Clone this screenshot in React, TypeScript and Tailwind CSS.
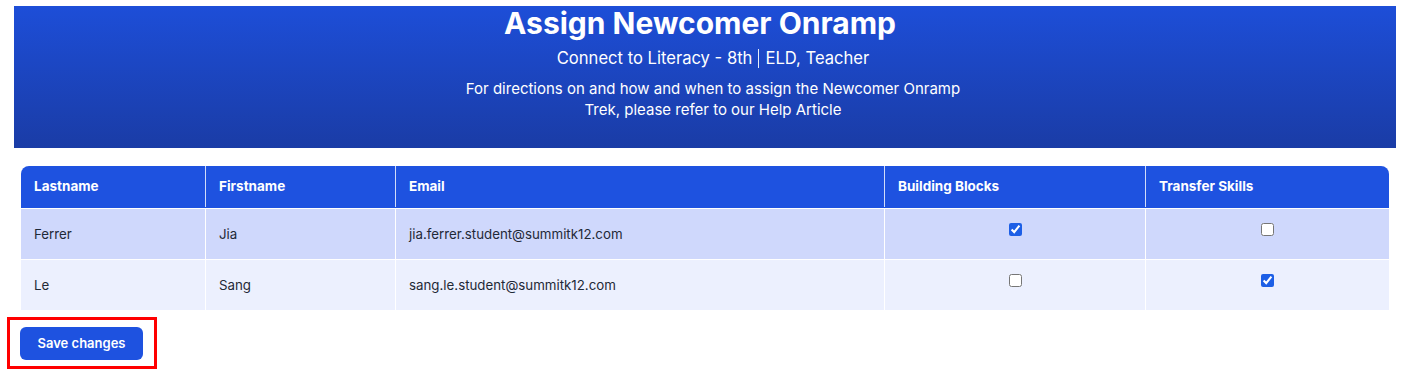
import React from 'react';

type Student = {
  last: string;
  first: string;
  email: string;
  blocks: boolean;
  transfer: boolean;
};

const students: Student[] = [
  { last: 'Ferrer', first: 'Jia', email: 'jia.ferrer.student@summitk12.com', blocks: true, transfer: false },
  { last: 'Le', first: 'Sang', email: 'sang.le.student@summitk12.com', blocks: false, transfer: true },
];

function Check({ checked }: { checked: boolean }) {
  return (
    <input
      type="checkbox"
      defaultChecked={checked}
      className="w-[13px] h-[13px] m-0 accent-[#1d5fe6] align-middle"
    />
  );
}

export default function App() {
  return (
    <div className="bg-white min-h-[376px] pt-[6px]" style={{ fontFamily: 'Inter, "Noto Sans", sans-serif' }}>
      {/* banner */}
      <div className="ml-[14px] w-[1382px] h-[142px] bg-gradient-to-b from-[#1d4ed8] to-[#1a3ca6] text-white flex flex-col items-center">
        <h1 className="mr-[10px] text-[30px] leading-[34px] font-bold">Assign Newcomer Onramp</h1>
        <p className="ml-[16px] mt-[8px] text-[16.6px] leading-[20px] flex items-center">
          Connect to Literacy - 8th
          <span className="mx-[6px] h-[19px] border-l border-white/90" />
          ELD, Teacher
        </p>
        <p className="ml-[16px] mt-[10px] text-[15px] leading-[21px] text-center max-w-[505px]">
          For directions on and how and when to assign the Newcomer Onramp Trek, please refer to our Help Article
        </p>
      </div>

      {/* table */}
      <div className="ml-[21px] mt-[18px] w-[1368px] text-[13.3px] text-[#1f2937]">
        <div className="grid grid-cols-[184px_190px_489px_261px_244px] bg-[#1e52e0] text-white text-[13.5px] font-bold rounded-t-lg h-[42px] pb-[1px]">
          <div className="px-[13px] flex items-center">Lastname</div>
          <div className="px-[13px] flex items-center border-l border-white/80">Firstname</div>
          <div className="px-[13px] flex items-center border-l border-white/80">Email</div>
          <div className="px-[13px] flex items-center border-l border-white/80">Building Blocks</div>
          <div className="px-[13px] flex items-center border-l border-white/80">Transfer Skills</div>
        </div>
        {students.map((s, i) => (
          <div
            key={s.email}
            className={
              'grid grid-cols-[184px_190px_489px_261px_244px] h-[51px] border-t border-white ' +
              (i === 0 ? 'bg-[#cfd8fc]' : 'bg-[#ecf0fe]')
            }
          >
            <div className="px-[13px] pt-[2px] flex items-center">{s.last}</div>
            <div className="px-[13px] pt-[2px] flex items-center border-l border-white">{s.first}</div>
            <div className="px-[13px] pt-[2px] flex items-center border-l border-white">{s.email}</div>
            <div className="flex justify-center pt-[14px] border-l border-white">
              <Check checked={s.blocks} />
            </div>
            <div className="flex justify-center pt-[14px] border-l border-white">
              <Check checked={s.transfer} />
            </div>
          </div>
        ))}
      </div>

      {/* save */}
      <div className="relative ml-[20px] mt-[17px] w-[123px]">
        <button className="w-[123px] h-[33px] rounded-md bg-[#1e52e0] text-white text-[13px] font-semibold">
          Save changes
        </button>
        <div className="absolute -left-[13px] -top-[10px] w-[150px] h-[52px] border-[3px] border-[#f00] pointer-events-none" />
      </div>
    </div>
  );
}
